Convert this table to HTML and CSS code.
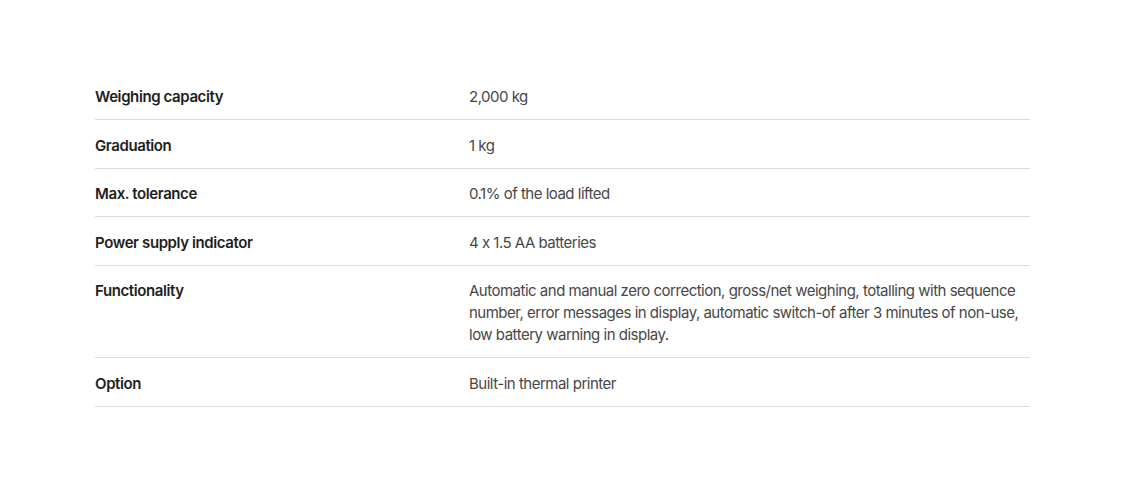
FILE: index.html
```html
<!DOCTYPE html>
<html lang="en">
<head>
<meta charset="utf-8">
<title>Specifications</title>
<link rel="stylesheet" href="styles.css">
</head>
<body>
<main class="page">
  <dl class="specs">
    <div class="row"><dt>Weighing capacity</dt><dd>2,000 kg</dd></div>
    <div class="row"><dt>Graduation</dt><dd>1 kg</dd></div>
    <div class="row"><dt>Max. tolerance</dt><dd>0.1% of the load lifted</dd></div>
    <div class="row"><dt>Power supply indicator</dt><dd>4 x 1.5 AA batteries</dd></div>
    <div class="row"><dt>Functionality</dt><dd>Automatic and manual zero correction, gross/net weighing, totalling with sequence number, error messages in display, automatic switch-of after 3 minutes of non-use, low battery warning in display.</dd></div>
    <div class="row"><dt>Option</dt><dd>Built-in thermal printer</dd></div>
  </dl>
</main>
</body>
</html>
```
FILE: styles.css
```css
* { box-sizing: border-box; }
html, body { margin: 0; padding: 0; background: #fff; }
body {
  font-family: Inter, "Noto Sans", "Liberation Sans", sans-serif;
  font-size: 15px;
  line-height: 22px;
  color: #222;
}
.page { padding: 71.5px 93px 0 95px; }
.specs { margin: 0; width: 935px; }
.row {
  display: grid;
  grid-template-columns: 374px 1fr;
  padding: 14.5px 0 11px;
  border-bottom: 1px solid #dcdcdc;
}
dt { font-weight: 600; color: #1e1e1e; letter-spacing: -0.4px; }
dd { margin: 0; color: #474747; padding-right: 8px; letter-spacing: -0.5px; }
```
